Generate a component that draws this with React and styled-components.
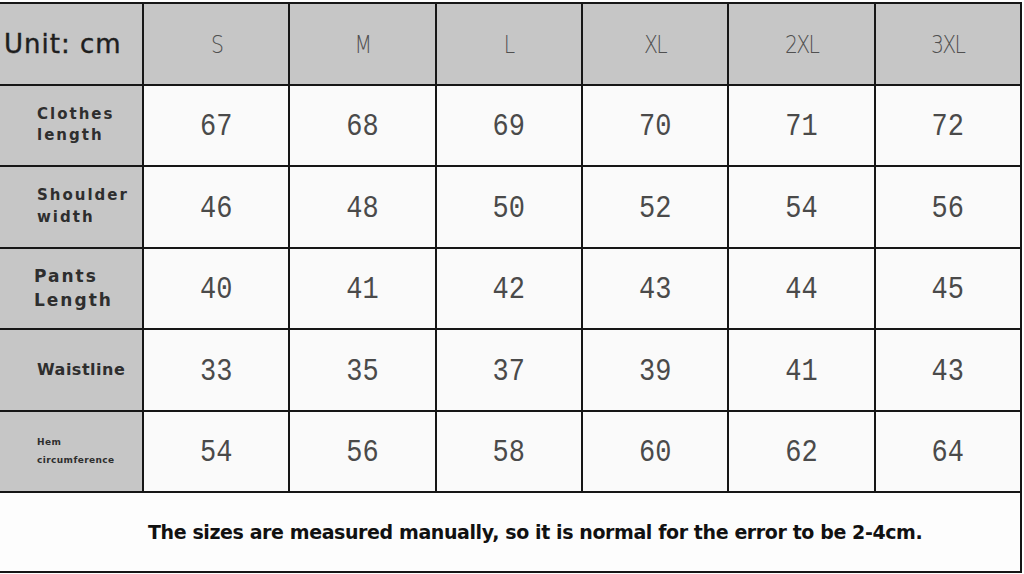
import React from 'react';
import styled, { createGlobalStyle } from 'styled-components';

const GlobalStyle = createGlobalStyle`
  html, body {
    margin: 0;
    padding: 0;
    background: #fdfdfd;
  }
`;

const Page = styled.div`
  width: 1024px;
  height: 574px;
  padding-top: 2px;
  box-sizing: border-box;
  background: #fdfdfd;
`;

const SizeGrid = styled.div`
  display: grid;
  grid-template-columns: 142px repeat(6, 1fr);
  grid-template-rows: repeat(6, 79.5px);
  gap: 2px;
  width: 1022px;
  box-sizing: border-box;
  padding: 2px 2px 2px 0;
  background: #161616;
`;

const Cell = styled.div`
  display: flex;
  align-items: center;
  justify-content: center;
  background: ${(p) => (p.$grey ? '#c6c6c6' : '#fafafa')};
`;

const UnitCell = styled(Cell)`
  justify-content: flex-start;
  padding-left: 4px;
  font-family: 'DejaVu Sans', sans-serif;
  font-size: 26px;
  font-weight: 500;
  color: #1e1e1e;
  letter-spacing: 1px;
  -webkit-text-stroke: 0.4px #1e1e1e;
`;

const SizeLabel = styled(Cell)`
  font-family: 'DejaVu Sans', sans-serif;
  font-size: 24px;
  font-weight: 200;
  color: #505050;
  letter-spacing: -2px;
  padding-top: 2px;
  span {
    display: inline-block;
    transform: scaleX(0.85);
  }
`;

const RowLabel = styled(Cell)`
  flex-direction: column;
  align-items: flex-start;
  padding-left: ${(p) => p.$indent || 37}px;
  justify-content: center;
  font-family: 'DejaVu Sans', sans-serif;
  font-size: ${(p) => p.$size || 15}px;
  font-weight: bold;
  color: #2e2e2e;
  letter-spacing: ${(p) => p.$spacing ?? 2}px;
  line-height: ${(p) => p.$lh || 1.45};
`;

const Value = styled(Cell)`
  font-family: 'Liberation Mono', monospace;
  font-size: 27px;
  color: #4a4a4a;
  padding-top: 4px;
  span {
    display: inline-block;
    transform: scaleY(1.15);
  }
`;

const Note = styled.div`
  width: 1022px;
  height: 80px;
  box-sizing: border-box;
  border-right: 2px solid #161616;
  border-bottom: 2px solid #161616;
  display: flex;
  align-items: center;
  padding-left: 148px;
  font-family: 'DejaVu Sans', sans-serif;
  font-weight: bold;
  font-size: 19px;
  letter-spacing: -0.4px;
  color: #111;
  background: #fdfdfd;
`;

const sizes = ['S', 'M', 'L', 'XL', '2XL', '3XL'];

const rows = [
  { label: ['Clothes', 'length'], values: [67, 68, 69, 70, 71, 72] },
  { label: ['Shoulder', 'width'], values: [46, 48, 50, 52, 54, 56] },
  { label: ['Pants', 'Length'], values: [40, 41, 42, 43, 44, 45], indent: 34, size: 17 },
  { label: ['Waistline'], values: [33, 35, 37, 39, 41, 43], size: 16, spacing: 0.5 },
  { label: ['Hem', 'circumference'], values: [54, 56, 58, 60, 62, 64], size: 9, spacing: 0.4, lh: 2 },
];

const App = () => {
  return (
    <Page>
      <GlobalStyle />
      <SizeGrid>
        <UnitCell $grey>Unit: cm</UnitCell>
        {sizes.map((s) => (
          <SizeLabel $grey key={s}>
            <span>{s}</span>
          </SizeLabel>
        ))}
        {rows.map((row) => (
          <React.Fragment key={row.label.join(' ')}>
            <RowLabel
              $grey
              $indent={row.indent}
              $size={row.size}
              $spacing={row.spacing}
              $lh={row.lh}
            >
              {row.label.map((l) => (
                <div key={l}>{l}</div>
              ))}
            </RowLabel>
            {row.values.map((v, i) => (
              <Value key={i}>
                <span>{v}</span>
              </Value>
            ))}
          </React.Fragment>
        ))}
      </SizeGrid>
      <Note>The sizes are measured manually, so it is normal for the error to be 2-4cm.</Note>
    </Page>
  );
};

export default App;
